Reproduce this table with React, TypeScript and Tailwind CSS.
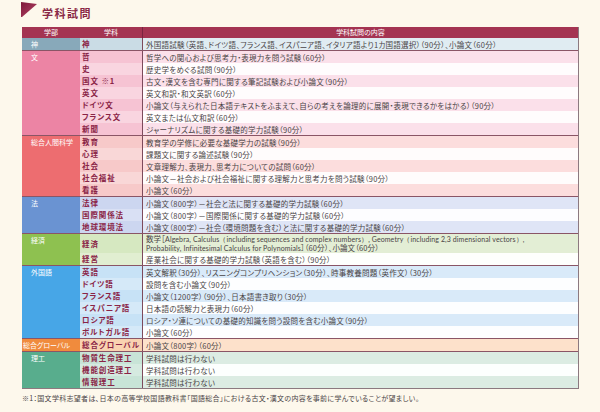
import React from "react";

type Row = { d: string; c: React.ReactNode; h?: string; latin?: boolean };
type Group = {
  f: string;
  fBg: string;
  dA: string;
  dB: string;
  cA: string;
  cB: string;
  fPad?: string;
  rows: Row[];
};

const groups: Group[] = [
  {
    f: "神",
    fBg: "bg-[#88a9ba]",
    dA: "bg-[#cadce5]",
    dB: "bg-[#cadce5]",
    cA: "bg-[#e0ecf2]",
    cB: "bg-[#e0ecf2]",
    rows: [
      {
        d: "神",
        c: "外国語試験（英語、ドイツ語、フランス語、イスパニア語、イタリア語より1カ国語選択）（90分）、小論文（60分）",
      },
    ],
  },
  {
    f: "文",
    fBg: "bg-[#ec84a4]",
    dA: "bg-[#f6c3d3]",
    dB: "bg-[#f9d5e0]",
    cA: "bg-[#fbe0ea]",
    cB: "bg-[#fffcfd]",
    rows: [
      { d: "哲", c: "哲学への関心および思考力・表現力を問う試験（60分）" },
      { d: "史", c: "歴史学をめぐる試問（90分）" },
      { d: "国文 ※1", c: "古文・漢文を含む専門に関する筆記試験および小論文（90分）" },
      { d: "英文", c: "英文和訳・和文英訳（60分）" },
      {
        d: "ドイツ文",
        c: "小論文（与えられた日本語テキストをふまえて、自らの考えを論理的に展開・表現できるかをはかる）（90分）",
      },
      { d: "フランス文", c: "英文または仏文和訳（60分）" },
      { d: "新聞", c: "ジャーナリズムに関する基礎的学力試験（90分）" },
    ],
  },
  {
    f: "総合人間科学",
    fBg: "bg-[#ed6d70]",
    dA: "bg-[#f7c9c9]",
    dB: "bg-[#f9d7d7]",
    cA: "bg-[#fcdddd]",
    cB: "bg-[#fffcfc]",
    rows: [
      { d: "教育", c: "教育学の学修に必要な基礎学力の試験（90分）" },
      { d: "心理", c: "課題文に関する論述試験（90分）" },
      { d: "社会", c: "文章理解力、表現力、思考力についての試問（60分）" },
      { d: "社会福祉", c: "小論文－社会および社会福祉に関する理解力と思考力を問う試験（90分）" },
      { d: "看護", c: "小論文（60分）" },
    ],
  },
  {
    f: "法",
    fBg: "bg-[#6a93d2]",
    dA: "bg-[#ccd6f0]",
    dB: "bg-[#d9e0f4]",
    cA: "bg-[#dfe5f6]",
    cB: "bg-[#fdfdff]",
    rows: [
      { d: "法律", c: "小論文（800字）－社会と法に関する基礎的学力試験（60分）" },
      { d: "国際関係法", c: "小論文（800字）－国際関係に関する基礎的学力試験（60分）" },
      {
        d: "地球環境法",
        c: "小論文（800字）－社会（環境問題を含む）と法に関する基礎的学力試験（60分）",
      },
    ],
  },
  {
    f: "経済",
    fBg: "bg-[#8ec150]",
    dA: "bg-[#d6e8c1]",
    dB: "bg-[#e1eed1]",
    cA: "bg-[#e3eed5]",
    cB: "bg-[#fefffd]",
    rows: [
      {
        d: "経済",
        h: "h-[19px]",
        latin: true,
        c: (
          <>
            <div>
              数学［<span className="font-['Lato',sans-serif] text-[7px]">Algebra, Calculus（including sequences and complex numbers）, Geometry（including 2,3 dimensional vectors）,</span>
            </div>
            <div>
              <span className="font-['Lato',sans-serif] text-[7px]">Probability, Infinitesimal Calculus for Polynomials</span>］（60分）、小論文（60分）
            </div>
          </>
        ),
      },
      { d: "経営", c: "産業社会に関する基礎的学力試験（英語を含む）（90分）" },
    ],
  },
  {
    f: "外国語",
    fBg: "bg-[#47a6e7]",
    dA: "bg-[#c7e2f6]",
    dB: "bg-[#d5e9f8]",
    cA: "bg-[#d9eaf9]",
    cB: "bg-[#fdfeff]",
    rows: [
      {
        d: "英語",
        c: "英文解釈（30分）、リスニングコンプリヘンション（30分）、時事教養問題（英作文）（30分）",
      },
      { d: "ドイツ語", c: "設問を含む小論文（90分）" },
      { d: "フランス語", c: "小論文（1200字）（90分）、日本語書き取り（30分）" },
      { d: "イスパニア語", c: "日本語の読解力と表現力（60分）" },
      { d: "ロシア語", c: "ロシア・ソ連についての基礎的知識を問う設問を含む小論文（90分）" },
      { d: "ポルトガル語", c: "小論文（60分）" },
    ],
  },
  {
    f: "総合グローバル",
    fBg: "bg-[#f08b3d]",
    fPad: "pl-[1px]",
    dA: "bg-[#f9d2b1]",
    dB: "bg-[#f9d2b1]",
    cA: "bg-[#fde1cb]",
    cB: "bg-[#fde1cb]",
    rows: [{ d: "総合グローバル", c: "小論文（800字）（60分）" }],
  },
  {
    f: "理工",
    fBg: "bg-[#58ad8d]",
    dA: "bg-[#c8e4d7]",
    dB: "bg-[#d5eae0]",
    cA: "bg-[#dcece3]",
    cB: "bg-[#fdfffe]",
    rows: [
      { d: "物質生命理工", c: "学科試問は行わない" },
      { d: "機能創造理工", c: "学科試問は行わない" },
      { d: "情報理工", c: "学科試問は行わない" },
    ],
  },
];

export default function App() {
  return (
    <div className="w-[600px] h-[412px] bg-[#fdf8ec] font-['Noto_Sans_CJK_JP',sans-serif] [font-feature-settings:'palt'] text-[#4a4446] overflow-hidden">
      {/* Title */}
      <div className="flex items-start h-[27px] pl-[21px] pt-[2px]">
        <svg width="17" height="16" viewBox="0 0 17 16" className="shrink-0">
          <defs>
            <linearGradient id="tg" x1="0" y1="0" x2="1" y2="1">
              <stop offset="0" stopColor="#7d1737" />
              <stop offset="1" stopColor="#b5466a" />
            </linearGradient>
          </defs>
          <polygon points="0,0 16,2 1,15 0,15" fill="url(#tg)" />
        </svg>
        <div className="ml-[4px] mt-[5px] text-[11px] leading-[12px] font-bold tracking-[1.5px] text-[#8a2946]">
          学科試問
        </div>
      </div>

      {/* Table */}
      <div className="ml-[22px] w-[557px] border-r border-b border-[#8c7980]">
        <div className="flex h-[11px] bg-[#a43452] text-white text-[7px] leading-[11px]">
          <div className="w-[58px] text-center">学部</div>
          <div className="w-[63px] text-center border-r border-[#7a2440]">学科</div>
          <div className="flex-1 text-center">学科試問の内容</div>
        </div>
        {groups.map((g, gi) => (
          <div key={gi} className={`flex ${gi > 0 ? "border-t border-[#8a5566]" : ""}`}>
            <div
              className={`w-[58px] shrink-0 ${g.fBg} text-white text-[7px] leading-[12px] ${g.fPad ?? "pl-[9px]"}`}
            >
              {g.f}
            </div>
            <div className="flex-1 flex flex-col">
              {g.rows.map((r, ri) => {
                const colored = ri % 2 === 0;
                return (
                  <div key={ri} className={`flex ${r.h ?? "h-[12px]"}`}>
                    <div
                      className={`w-[63px] shrink-0 border-r border-[#7d4a5c] ${colored ? g.dA : g.dB} text-[#8a2446] font-bold text-[7.5px] tracking-[0.9px] pl-[2px] flex items-center whitespace-nowrap`}
                    >
                      {r.d}
                    </div>
                    <div
                      className={`flex-1 ${colored ? g.cA : g.cB} text-[7.5px] pl-[3px] flex flex-col justify-center whitespace-nowrap ${r.latin ? "leading-[8.5px] tracking-[0.1px]" : "leading-[9px] tracking-[0.25px]"}`}
                    >
                      {r.latin ? r.c : <div>{r.c}</div>}
                    </div>
                  </div>
                );
              })}
            </div>
          </div>
        ))}
      </div>

      {/* Footnote */}
      <div className="ml-[22px] mt-[5px] text-[7px] leading-[9px] text-[#4a4446] tracking-[0.3px]">
        ※1：国文学科志望者は、日本の高等学校国語教科書「国語総合」における古文・漢文の内容を事前に学んでいることが望ましい。
      </div>
    </div>
  );
}
